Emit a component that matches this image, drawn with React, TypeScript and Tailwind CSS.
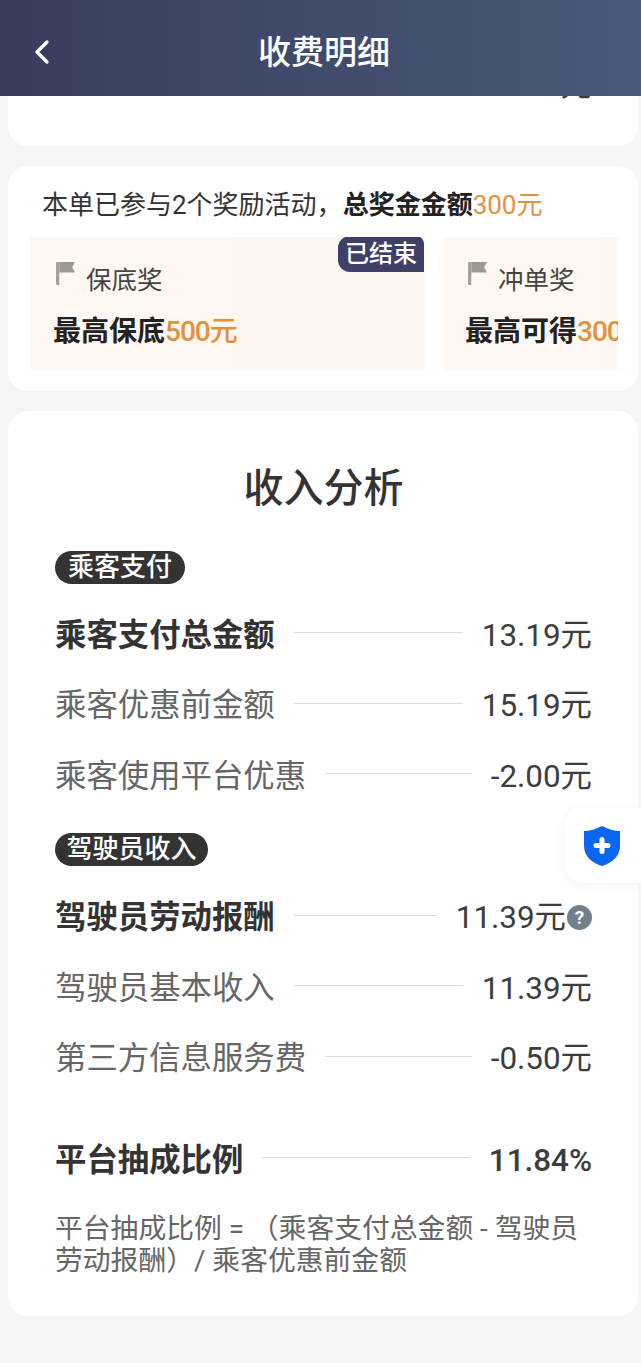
import { ChevronLeft } from "lucide-react"

const fontStack = { fontFamily: 'Roboto, "Noto Sans CJK SC", sans-serif' }

function Flag({ className }: { className: string }) {
  return (
    <svg viewBox="0 0 20 24" className={className} aria-hidden="true">
      <rect x="0" y="0" width="3.5" height="24" rx="1" fill="#a5a29e" />
      <path d="M3.5 0H20L17 5.5L20 11H3.5Z" fill="#9c9994" />
    </svg>
  )
}

function Row({
  label,
  value,
  strong,
  boldValue,
  help,
}: {
  label: string
  value: string
  strong?: boolean
  boldValue?: boolean
  help?: boolean
}) {
  return (
    <div className="flex h-[70.5px] items-center">
      <span className={strong ? "text-[31.4px] font-bold text-[#333]" : "text-[31.4px] text-[#666]"}>{label}</span>
      <div className="mx-[19px] mb-[5px] h-px flex-1 bg-[#dedede]" />
      <span className={boldValue ? "text-[31.4px] font-medium text-[#3d3d3d]" : "text-[31.4px] text-[#3d3d3d]"}>
        {value}
      </span>
      {help && (
        <span className="ml-px flex h-[25px] w-[25px] items-center justify-center rounded-full bg-[#70808c] text-[19px] font-bold text-white">
          ?
        </span>
      )}
    </div>
  )
}

function Pill({ children, tight }: { children: string; tight?: boolean }) {
  return (
    <div className="flex">
      <span
        className={
          tight
            ? "flex h-[33px] items-center rounded-full bg-[#333] px-[11.5px] text-[26px] font-medium text-white"
            : "flex h-[33px] items-center rounded-full bg-[#333] px-[13px] text-[26px] font-medium text-white"
        }
      >
        {children}
      </span>
    </div>
  )
}

export default function App() {
  return (
    <div className="relative h-[1363px] w-[641px] overflow-hidden bg-[#f6f6f6]" style={fontStack}>
      <header className="flex h-[96px] items-center justify-center bg-gradient-to-r from-[#373d5c] to-[#4a5a7a] pl-[7px] pt-[10px]">
        <ChevronLeft className="absolute left-[22px] top-[32px] h-[40px] w-[40px] text-white" strokeWidth={2} />
        <h1 className="text-[33px] font-medium text-white">收费明细</h1>
      </header>

      <div className="ml-2 mr-[3px] h-[50px] overflow-hidden rounded-b-[20px] bg-white">
        <p className="-mt-[28px] pr-[46px] text-right text-[31.4px] leading-[36px] text-[#3d3d3d]">元</p>
      </div>

      <section className="ml-2 mr-[3px] mt-5 h-[225px] overflow-hidden rounded-[20px] bg-white pt-[21px]">
        <p className="pl-[34px] text-[26px] leading-[36px] text-[#333]">
          本单已参与2个奖励活动，<span className="font-bold text-[#222]">总奖金金额</span>
          <span className="text-[#e2923f]">300元</span>
        </p>
        <div className="ml-[22px] mt-[14px] flex w-[588px] gap-[18px] overflow-hidden">
          <div className="relative h-[133px] w-[395px] shrink-0 bg-gradient-to-r from-[#fff8f2] to-[#fff5f1] pl-[23px] pt-[24px]">
            <span className="absolute -top-px right-px flex h-[36px] items-center rounded-bl-[12px] rounded-tl-[12px] rounded-tr-[8px] bg-[#3e4068] px-[7px] text-[24px] font-medium text-white">
              已结束
            </span>
            <div className="flex h-[36px] items-start">
              <Flag className="ml-[3px] mt-[1px] h-[23px] w-[19px]" />
              <span className="ml-[11px] mt-[1px] text-[25.5px] leading-[36px] text-[#444]">保底奖</span>
            </div>
            <p className="mt-[17px] whitespace-nowrap text-[28px] font-bold leading-[36px] text-[#222]">
              最高保底<span className="font-medium tracking-[-1px] text-[#e2923f]">500元</span>
            </p>
          </div>
          <div className="h-[133px] w-[300px] shrink-0 bg-gradient-to-r from-[#fff8f2] to-[#fff5f1] pl-[22px] pt-[24px]">
            <div className="flex h-[36px] items-start">
              <Flag className="ml-[3px] mt-[1px] h-[23px] w-[19px]" />
              <span className="ml-[11px] mt-[1px] text-[25.5px] leading-[36px] text-[#444]">冲单奖</span>
            </div>
            <p className="mt-[17px] whitespace-nowrap text-[28px] font-bold leading-[36px] text-[#222]">
              最高可得<span className="font-medium tracking-[-1px] text-[#e2923f]">300元</span>
            </p>
          </div>
        </div>
      </section>

      <section className="ml-2 mr-[3px] mt-5 h-[905px] rounded-[20px] bg-white pl-[47px] pr-[46px] pt-[50px]">
        <h2 className="text-center text-[40px] font-medium leading-[56px] text-[#333]">收入分析</h2>
        <div className="mt-[34px]">
          <Pill>乘客支付</Pill>
          <div className="mt-[16px]">
            <Row label="乘客支付总金额" value="13.19元" strong />
            <Row label="乘客优惠前金额" value="15.19元" />
            <Row label="乘客使用平台优惠" value="-2.00元" />
          </div>
        </div>
        <div className="mt-[21px]">
          <Pill tight>驾驶员收入</Pill>
          <div className="mt-[17px]">
            <Row label="驾驶员劳动报酬" value="11.39元" strong help />
            <Row label="驾驶员基本收入" value="11.39元" />
            <Row label="第三方信息服务费" value="-0.50元" />
          </div>
        </div>
        <div className="mt-[31px]">
          <Row label="平台抽成比例" value="11.84%" strong boldValue />
        </div>
        <p className="mt-[17px] text-[27.8px] leading-[32px] text-[#666]">
          平台抽成比例 = （乘客支付总金额 - 驾驶员劳动报酬）/ 乘客优惠前金额
        </p>
      </section>

      <div className="absolute left-[565px] top-[808px] flex h-[75px] w-[76px] items-center justify-center rounded-l-[18px] bg-white shadow-[0_2px_14px_rgba(0,0,0,0.05)]">
        <svg viewBox="0 0 38 40" className="ml-[-2px] h-[40px] w-[38px]" aria-hidden="true">
          <path d="M19 0C25 3 31 5 37 5V20C37 30 29 37 19 40C9 37 1 30 1 20V5C7 5 13 3 19 0Z" fill="#0a66f0" />
          <path d="M16.5 13.5a2.5 2.5 0 0 1 5 0V17h3.5a2.5 2.5 0 0 1 0 5h-3.5v3.5a2.5 2.5 0 0 1-5 0V22H13a2.5 2.5 0 0 1 0-5h3.5Z" fill="#fff" />
        </svg>
      </div>
    </div>
  )
}
